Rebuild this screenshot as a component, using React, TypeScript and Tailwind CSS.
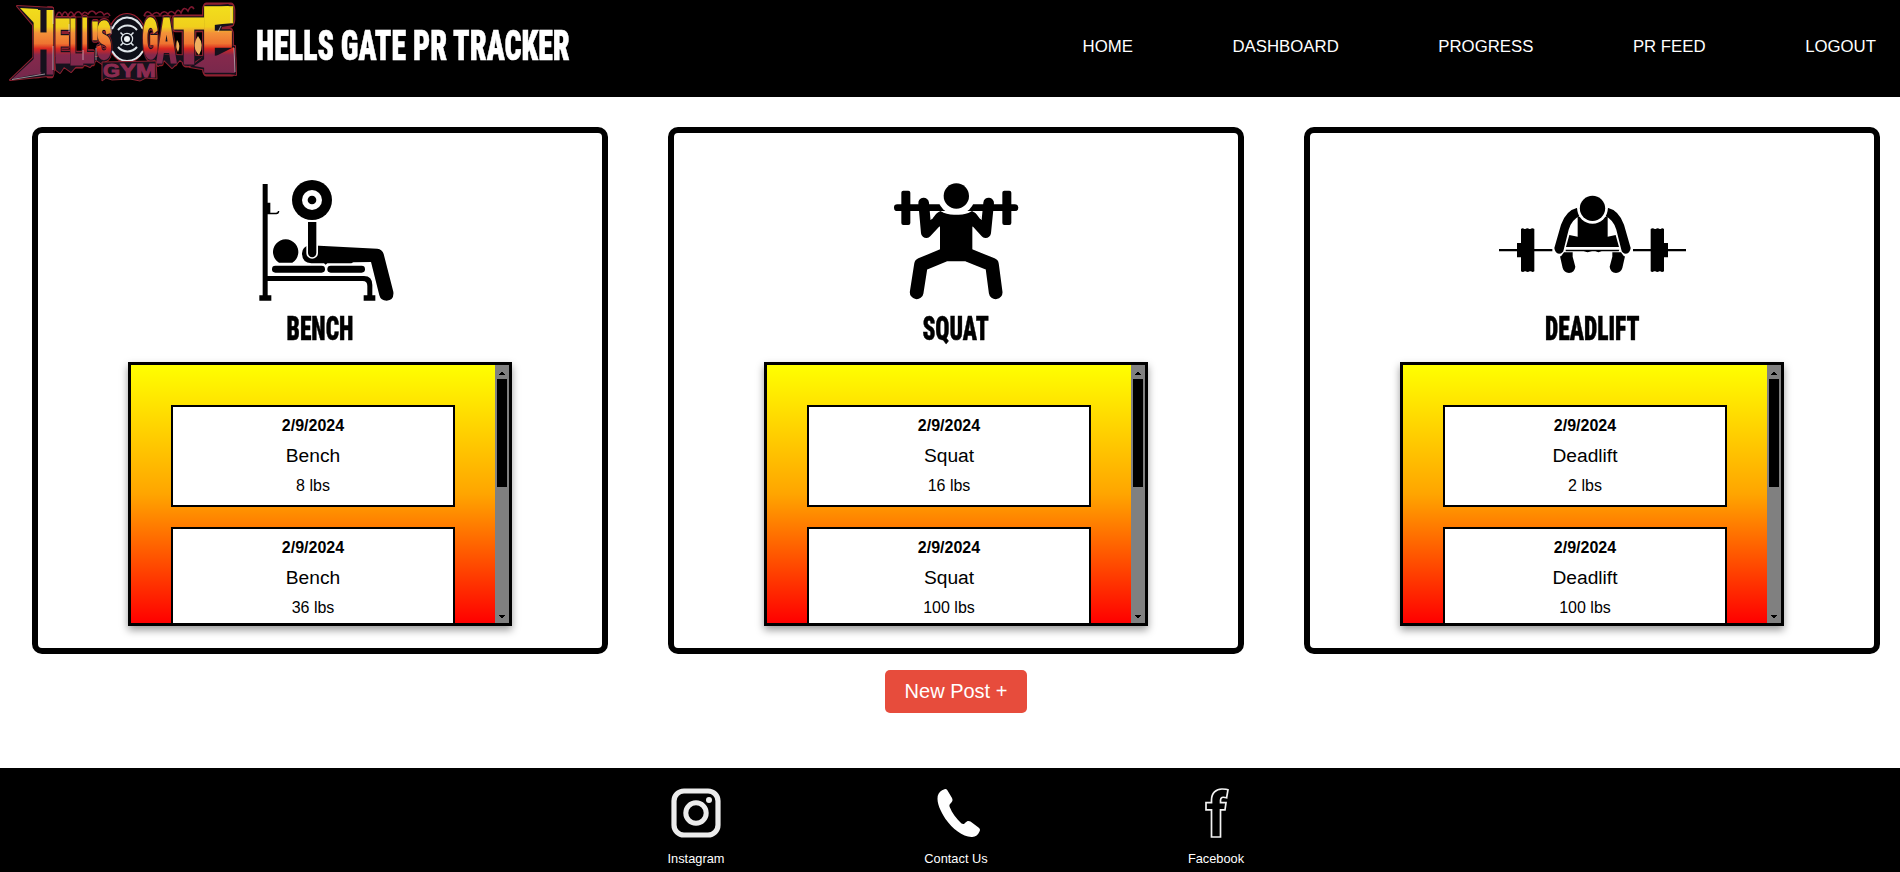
import type { ReactNode } from "react";

const links = ["HOME", "DASHBOARD", "PROGRESS", "PR FEED", "LOGOUT"];

type Glyph = { ch: string; x: number; y: number; w: number; h: number; adv: number };

const glyphs: Glyph[] = [
  { ch: "H", x: 33, y: 71, w: 21, h: 60, adv: 0.722 },
  { ch: "E", x: 55, y: 61, w: 15, h: 41, adv: 0.667 },
  { ch: "L", x: 70, y: 63, w: 13, h: 44, adv: 0.611 },
  { ch: "L", x: 82, y: 61, w: 12, h: 42, adv: 0.611 },
  { ch: "'", x: 92, y: 62, w: 6, h: 40, adv: 0.238 },
  { ch: "S", x: 97, y: 58, w: 14, h: 36, adv: 0.667 },
  { ch: "G", x: 143, y: 57, w: 15, h: 38, adv: 0.778 },
  { ch: "A", x: 157, y: 61, w: 19, h: 43, adv: 0.722 },
  { ch: "T", x: 175, y: 62, w: 28, h: 44, adv: 0.611 },
  { ch: "E", x: 203, y: 69, w: 31, h: 61, adv: 0.667 },
];

const gym: Glyph[] = [
  { ch: "G", x: 103, y: 77, w: 17, h: 13, adv: 0.778 },
  { ch: "Y", x: 120, y: 77, w: 16, h: 13, adv: 0.667 },
  { ch: "M", x: 136, y: 77, w: 20, h: 13, adv: 0.833 },
];

function Letters({ items }: { items: Glyph[] }) {
  return (
    <>
      {items.map((g, i) => (
        <text
          key={i}
          fontSize="40"
          fontFamily="'Liberation Sans', Arial, sans-serif"
          fontWeight="700"
          transform={`translate(${g.x} ${g.y}) scale(${g.w / (g.adv * 40)} ${g.h / 28.6})`}
        >
          {g.ch}
        </text>
      ))}
    </>
  );
}

function Logo() {
  return (
    <svg viewBox="0 0 240 97" className="h-[97px] w-60 shrink-0" aria-label="Hell's Gate Gym">
      <defs>
        <linearGradient id="fire" gradientUnits="userSpaceOnUse" x1="0" y1="4" x2="0" y2="80">
          <stop offset="0" stopColor="#f2e01c" />
          <stop offset="0.3" stopColor="#f0cf1c" />
          <stop offset="0.38" stopColor="#f3923a" />
          <stop offset="0.52" stopColor="#ee7431" />
          <stop offset="0.59" stopColor="#d9261f" />
          <stop offset="0.67" stopColor="#86294c" />
          <stop offset="1" stopColor="#74284c" />
        </linearGradient>
        <g id="word">
          <Letters items={glyphs} />
        </g>
        <g id="flares" strokeLinejoin="round">
          <path d="M17 6 L53 8 L54 70 L48 76 L10 80 L34 57 L33 25 Z" />
          <path d="M205 7 L228 4 L232 7 L233 25 L222 27 L218 44 L235 46 L236 75 L190 67 L205 55 Z" />
          <path d="M55 57 L56 70 L60 73 L64 67 L71 72 L80 62 L90 67 L96 60 L102 64 L110 57 Z" />
          <path d="M146 54 L155 60 L158 66 L164 60 L172 68 L180 60 L188 66 L204 56 Z" />
        </g>
        <mask id="wordMask" maskUnits="userSpaceOnUse" x="0" y="0" width="240" height="97">
          <use href="#word" fill="#fff" stroke="#fff" strokeWidth="3.4" />
          <path
            fill="#fff"
            d="M20 8 L38 9 L38 16 L36 70 L42 73 L12 79 L36 57 L35 24 Z M207 9 L228 6 L231 8 L231 23 L214 25 Z M209 56 L216 56 L234 47 L235 73 L194 66 Z"
          />
        </mask>
      </defs>
      <g fill="none" stroke="#7d1830" strokeWidth="1.6">
        <path d="M56 17 q3-9 6-1 q3-8 6 0 q3-8 6 0 q4-8 8-1 q2-5 6-1 q4-6 8 0 q5-5 8 1 q4-4 6 1" />
        <path d="M144 16 q3-8 8-1 q5-5 8 0 q4-6 8-1 q3-5 7 0 q3-7 6-1 q3-8 7-2 q3-7 6-2" />
        <path d="M57 17 h52 M144 16 h58" strokeWidth="1.2" />
      </g>
      <ellipse cx="127" cy="38" rx="19" ry="24.5" fill="#0d0f18" stroke="#a02030" strokeWidth="1.2" />
      <g fill="none" stroke="#dfe6ea">
        <path
          d="M112 29 Q118 17.5 127 17.5 Q137 17.5 143 29 M112 51 Q118 61 127 61 Q137 61 143 51"
          strokeWidth="2"
        />
        <path d="M118 30 A12.5 12.5 0 0 1 137 30 M118 47 A12.5 12.5 0 0 0 137 47" strokeWidth="2" />
        <circle cx="127" cy="39" r="5.6" strokeWidth="1.2" />
        <path
          d="M120.5 32.5 L123 35 M133.5 32.5 L131 35 M120.5 45.5 L123 43 M133.5 45.5 L131 43"
          strokeWidth="1.5"
        />
      </g>
      <circle cx="127" cy="39" r="3" fill="#f0f5f6" />
      <use href="#flares" fill="#8e2030" stroke="#8e2030" strokeWidth="2" />
      <use href="#word" fill="#8e2030" stroke="#8e2030" strokeWidth="7" strokeLinejoin="round" />
      <use href="#flares" fill="#15111c" />
      <use href="#word" fill="#15111c" stroke="#15111c" strokeWidth="5" strokeLinejoin="round" />
      <rect width="240" height="97" fill="url(#fire)" mask="url(#wordMask)" />
      <g fill="none" stroke="#e9dfe6" strokeWidth="0.8" opacity="0.75">
        <path d="M53 10 V24 M53 46 V70 M69 24 V32 M83 50 V60 M96 48 V60 M111 26 V34 M45 74 L12 79.5 M231 8 V23 M234 48 L235 72 M221 26 L218 32" />
      </g>
      <path d="M177 40 q4 5 1 12 q-3-5-1-12 M198 36 q7 9 1 19 q-8-8-1-19" fill="#f0b060" />
      <path
        d="M102 62 L156 61 L157 79 L146 78 L140 81 L130 79 L112 80 L106 78 L102 81 Z"
        fill="#16121c"
        stroke="#8e2030"
        strokeWidth="1"
      />
      <g fill="#8c2b50" stroke="#8c2b50" strokeWidth="2">
        <Letters items={gym} />
      </g>
    </svg>
  );
}

function BenchIcon() {
  return (
    <svg viewBox="-60 15 600 390" className="h-[130px] w-[200px]">
      <path d="M68 42 H83 V98 H91 V128 H108 Q113 128 114 123 H118 Q117 133 109 133 H83 V318 H372 Q397 318 397 345 V376 H406 V392 H371 V376 H382 V348 Q382 333 368 333 H83 V376 H94 V392 H58 V376 H68 Z" />
      <circle cx="216" cy="90" r="60" />
      <circle cx="216" cy="90" r="30" fill="#fff" />
      <circle cx="216" cy="90" r="13" />
      <path d="M117 278 A38 38 0 1 1 157 278 Z" />
      <path d="M208 226 L412 236 Q427 238 431 252 L460 365 Q463 391 440 392 Q422 392 418 376 L393 276 L340 277 L334 280 H262 L257 284 L252 280 H214 Q186 278 186 250 Q187 230 208 226 Z" />
      <path d="M204 156 H229 V249 A12.5 12.5 0 0 1 204 249 Z" stroke="#fff" strokeWidth="10" />
      <path d="M190 150 H245 V156 H190 Z" fill="#fff" />
      <path d="M204 156 H229 V249 A12.5 12.5 0 0 1 204 249 Z" />
      <rect x="96" y="287" width="159" height="21" rx="10" />
      <rect x="262" y="287" width="113" height="21" rx="10" />
    </svg>
  );
}

function SquatIcon() {
  return (
    <svg viewBox="-72 15 600 390" className="h-[130px] w-[200px]">
      <rect x="42" y="103" width="373" height="20" rx="10" />
      <rect x="64" y="62" width="27" height="103" rx="6" />
      <rect x="367" y="62" width="27" height="103" rx="6" />
      <circle cx="229" cy="78" r="56" fill="#fff" />
      <circle cx="229" cy="78" r="38" />
      <path d="M181 123 Q202 136 229 134 Q256 136 276 123 L286 131 L306 154 L277 170 V274 H180 V170 L152 154 Z" />
      <g fill="none" stroke="#000" strokeWidth="32" strokeLinejoin="round" strokeLinecap="round">
        <path d="M131 99 L139 188 L181 143" />
        <path d="M326 99 L317 188 L276 143" />
        <path d="M190 256 L123 284 L110 367" strokeWidth="41" />
        <path d="M267 256 L336 284 L347 367" strokeWidth="41" />
      </g>
      <path d="M181 123 L156 139 L158 151 Z M276 123 L301 139 L299 151 Z" />
      <path d="M155 132 L172 127 L156 148 Z M302 132 L285 127 L301 148 Z" fill="#fff" />
    </svg>
  );
}

function DeadliftIcon() {
  const plate =
    "M123 177 q5-5 10 0 h3 q6-5 12 0 h3 q6-5 12 0 V304 q-5 4-10 0 h-4 q-6 4-12 0 h-3 q-5 4-11 0 V262 H111 V219 H123 Z";
  return (
    <svg viewBox="36 15 600 390" className="h-[130px] w-[200px]">
      <path d="M57 237 H217 V244 H57 Z M459 237 H618 V244 H459 Z" />
      <path d={plate} />
      <path d={plate} transform="translate(675 0) scale(-1 1)" />
      <path d="M293 140 H383 V200 L407 195 L417 231 H258 L268 195 L293 200 Z" />
      <path d="M257 239 H418 L416 244 H365 Q355 249 346 244 H336 Q322 249 311 244 H257 Z" />
      <path d="M243 259 L252 247 H278 V260 L286 290 Q284 308 267 309 Q252 308 248 294 L240 259 Z" />
      <path d="M432 259 L423 247 H397 V260 L389 290 Q391 308 408 309 Q423 308 427 294 L435 259 Z" />
      <path d="M292 113 Q258 121 243 164 L223 234 Q225 250 237 251 Q249 250 251 239 L266 179 Q275 149 299 138 Z" />
      <path d="M383 113 Q417 121 432 164 L452 234 Q450 250 438 251 Q426 250 424 239 L409 179 Q400 149 376 138 Z" />
      <circle cx="337.5" cy="115" r="46" fill="#fff" />
      <circle cx="337.5" cy="115" r="38" />
    </svg>
  );
}

function Scrollbar() {
  return (
    <div className="flex w-3.5 shrink-0 flex-col items-center bg-[#808080]">
      <div className="flex h-3.5 items-center justify-center pt-0.5">
        <svg viewBox="0 0 6 3" className="h-[3px] w-1.5" shapeRendering="crispEdges">
          <path d="M2 0h2v1h1v1h1v1H0V2h1V1h1z" />
        </svg>
      </div>
      <div className="h-[108px] w-2.5 bg-black" />
      <div className="flex-1" />
      <div className="flex h-3.5 items-center justify-center">
        <svg viewBox="0 0 6 3" className="h-[3px] w-1.5" shapeRendering="crispEdges">
          <path d="M0 0h6v1H5v1H4v1H2V2H1V1H0z" />
        </svg>
      </div>
    </div>
  );
}

function Entry({ lift, weight }: { lift: string; weight: number }) {
  return (
    <div className="flex h-[102px] shrink-0 flex-col items-center border-2 border-black bg-white pt-1 text-base leading-[30px] text-black">
      <strong className="font-bold">2/9/2024</strong>
      <span className="text-[19.2px]">{lift}</span>
      <span>{weight} lbs</span>
    </div>
  );
}

type CardProps = { lift: string; icon: ReactNode; weights: number[] };

function LiftCard({ lift, icon, weights }: CardProps) {
  return (
    <section className="flex h-[527px] w-[576px] flex-col items-center rounded-[10px] border-6 border-black pt-[42px]">
      {icon}
      <h2 className="mt-1 h-[39px] scale-x-[0.712] font-['Roboto',sans-serif] text-[33px] leading-10 font-black [-webkit-text-stroke:0.5px] [font-stretch:75%]">
        {lift.toUpperCase()}
      </h2>
      <div className="mt-3.5 flex h-[264px] w-96 border-3 border-black shadow-[0_4px_8px_rgba(0,0,0,0.4)]">
        <div className="flex flex-1 flex-col gap-5 overflow-hidden bg-[linear-gradient(to_bottom,#ffff00,#ffa500_50%,#ff0000)] px-10 pt-10">
          {weights.map((w) => (
            <Entry key={w} lift={lift} weight={w} />
          ))}
        </div>
        <Scrollbar />
      </div>
    </section>
  );
}

function Social({ label, children }: { label: string; children: ReactNode }) {
  return (
    <a className="flex w-[60px] flex-col items-center">
      {children}
      <span className="mt-3 text-[12.8px] leading-[18px] whitespace-nowrap">{label}</span>
    </a>
  );
}

export default function App() {
  return (
    <div className="flex h-[872px] w-[1900px] flex-col overflow-hidden bg-white font-['Liberation_Sans',Arial,sans-serif]">
      <header className="flex h-[97px] shrink-0 items-start bg-black text-white">
        <Logo />
        <div className="ml-4 h-[92px] w-[314px]">
          <h1 className="origin-left scale-x-[0.712] font-['Roboto',sans-serif] text-[42px] leading-[92px] font-black whitespace-nowrap [-webkit-text-stroke:0.6px] [font-stretch:75%]">
            HELLS GATE PR TRACKER
          </h1>
        </div>
        <nav className="ml-auto flex h-[94px] items-center gap-[99.5px] pr-6 text-[16.8px]">
          {links.map((l) => (
            <a key={l}>{l}</a>
          ))}
        </nav>
      </header>

      <main className="flex flex-1 flex-col items-center pt-[30px] pl-3">
        <div className="flex gap-[60px]">
          <LiftCard lift="Bench" icon={<BenchIcon />} weights={[8, 36]} />
          <LiftCard lift="Squat" icon={<SquatIcon />} weights={[16, 100]} />
          <LiftCard lift="Deadlift" icon={<DeadliftIcon />} weights={[2, 100]} />
        </div>
        <button className="mt-[15.5px] h-[43px] rounded-[5px] bg-[#e74c3c] px-5 text-xl text-white">New Post +</button>
      </main>

      <footer className="flex h-[104px] shrink-0 justify-center gap-[200px] bg-black pt-5 pl-3 text-white">
        <Social label="Instagram">
          <svg viewBox="0 0 50 50" className="size-[50px]" fill="none" stroke="#ececec">
            <rect x="3" y="3" width="44" height="44" rx="10" strokeWidth="5.2" />
            <circle cx="25" cy="25" r="10.2" strokeWidth="5" />
            <circle cx="38" cy="12" r="3" fill="#ececec" stroke="none" />
          </svg>
        </Social>
        <Social label="Contact Us">
          <svg viewBox="-1.5 0 50 50" className="size-[50px]" fill="#fff">
            <path d="M12 1.2 C13 0.6 14 1 14.7 2 L19.5 10 C20.5 12 20 13.5 18.5 15 C16.8 16.5 16.6 17.5 17.2 19 C19.5 25 24 31 29 35.5 C30.5 36.3 31.5 36.2 33 34.5 C34.5 32.8 36 32.5 38 33.5 L46 39.5 C47.8 41 47.8 42 47 43.5 C45.5 47 43 49.3 39 49 C30 48.5 20 41 13 31 C8 23 4 15 5.2 8 C6 4.5 8.5 2.5 12 1.2 Z" />
          </svg>
        </Social>
        <Social label="Facebook">
          <svg viewBox="0 0 50 50" className="size-[50px]" fill="none" stroke="#f2f2f2" strokeWidth="1.7">
            <path d="M20.5 49 V21.8 H15 V14.7 H20.5 V12 C20.5 5 25 1 31 1 C33.5 1 36 1.2 37 1.7 L35.6 9.8 C31.5 8.6 29.5 9.3 29.5 12.3 V14.7 H35 L34 21.8 H29.5 V49 Z" />
          </svg>
        </Social>
      </footer>
    </div>
  );
}
